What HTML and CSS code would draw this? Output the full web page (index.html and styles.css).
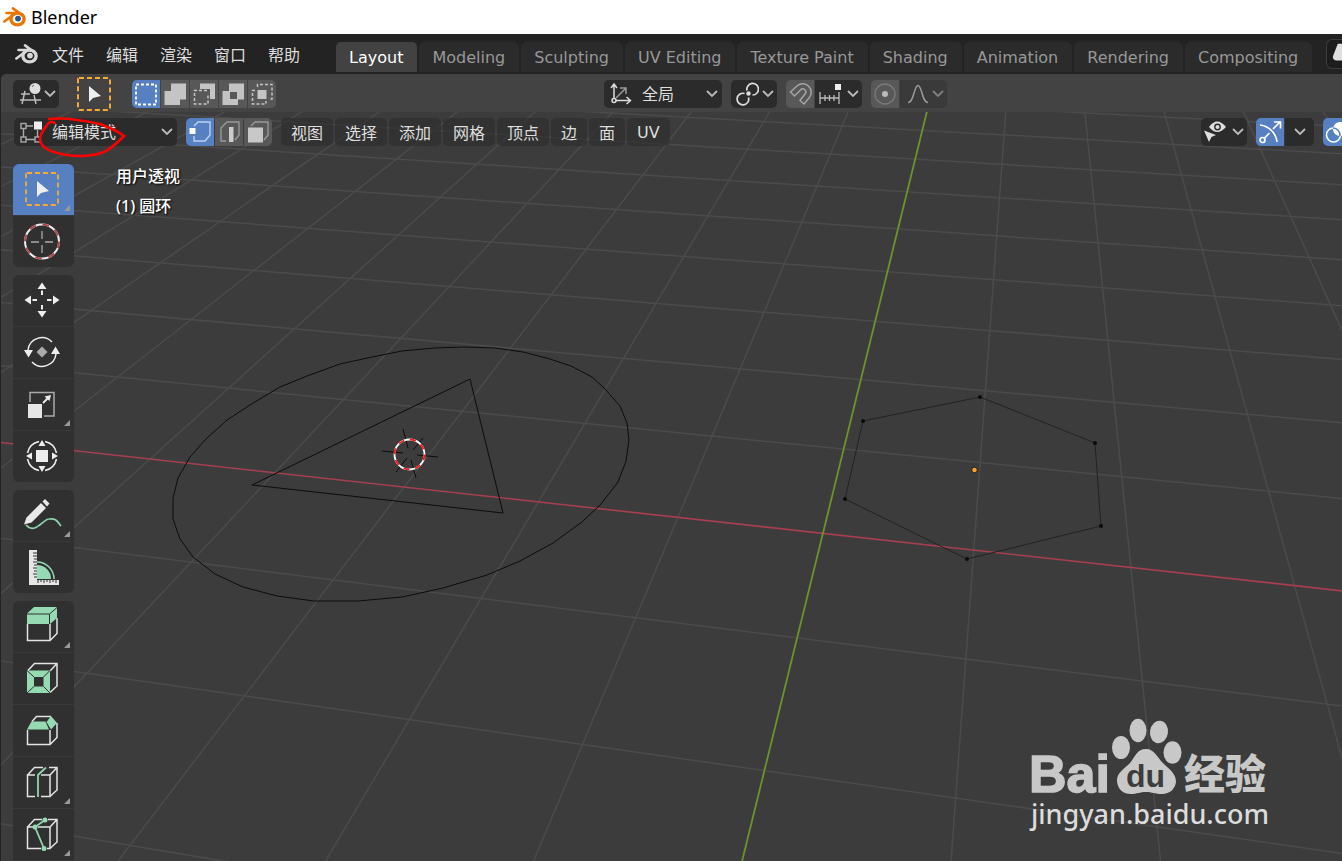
FILE: index.html
```html
<!DOCTYPE html>
<html lang="zh-CN">
<head>
  <meta charset="UTF-8" />
  <meta name="viewport" content="width=device-width, initial-scale=1.0"/>
  <title>Blender</title>
  <link rel="stylesheet" href="styles.css">
</head>
<body>

<!-- Shared icons -->
<svg class="defs" aria-hidden="true">
  <symbol id="chevron" viewBox="0 0 12 8"><path d="M1 1l5 5 5-5" fill="none" stroke="currentColor" stroke-width="1.800"/></symbol>
  <symbol id="logo" viewBox="0 0 24 20">
    <path d="M10 1.400L19 8M3.500 6H14M1.400 14.500L12 6.500" fill="none" stroke="currentColor" stroke-width="2.600" stroke-linecap="round"/>
    <ellipse cx="14.500" cy="12" rx="6.600" ry="5.900" fill="none" stroke="currentColor" stroke-width="3.400"/>
    <circle class="pupil" cx="15" cy="11.600" r="2.900"/>
  </symbol>
</svg>

<header class="titlebar">
  <svg class="logo logo-color"><use href="#logo"/></svg>
  <span>Blender</span>
</header>

<nav class="topbar">
  <svg class="logo"><use href="#logo"/></svg>
  <div class="menus">
    <button>文件</button>
    <button>编辑</button>
    <button>渲染</button>
    <button>窗口</button>
    <button>帮助</button>
  </div>
  <div class="tabs">
    <button class="active">Layout</button>
    <button>Modeling</button>
    <button>Sculpting</button>
    <button>UV Editing</button>
    <button>Texture Paint</button>
    <button>Shading</button>
    <button>Animation</button>
    <button>Rendering</button>
    <button>Compositing</button>
  </div>
  <button class="scene-btn" aria-label="Scene">
    <svg viewBox="0 0 16 30"><path d="M11 4L6 17q-1 4 3 5h7V4z" fill="#e0e0e0"/></svg>
  </button>
</nav>

<main class="editor">
  <!-- 3D scene -->
  <svg class="scene" viewBox="0 74 1342 787" preserveAspectRatio="xMinYMin slice">
    <g id="grid"></g>
    <polygon class="wire" points="629,440 626,461 618,482 601,504 582,522 553,543 520,561 487,575 443,588 402,597 358,601 314,601 277,596 243,587 215,574 193,557 180,539 173,519 173,498 178,478 190,457 206,439 227,420 253,403 280,387 307,376 340,364 372,357 402,351 434,348 464,347 495,348 523,352 550,359 571,366 592,377 605,389 620,406 627,423"/>
    <polygon class="wire" points="470,379 252,485 503,513"/>
    <polygon class="wire mesh" points="863,421 980,397 1095,443 1101,526 967,559 845,499"/>
    <g fill="#0a0a0a">
      <circle cx="863" cy="421" r="2"/><circle cx="980" cy="397" r="2"/>
      <circle cx="1095" cy="443" r="2"/><circle cx="1101" cy="526" r="2"/>
      <circle cx="967" cy="559" r="2"/><circle cx="845" cy="499" r="2"/>
    </g>
    <circle cx="974.5" cy="470" r="2.8" fill="#ffa028" stroke="#222" stroke-width="1"/>
    <!-- 3D cursor -->
    <path class="wire" d="M403 429l5 19M423 438l-10 12M382 451l21 2M417 455l21 2M411 460l5 18M407 458l-11 14"/>
    <circle cx="409.500" cy="454.500" r="15" fill="none" stroke="#fff" stroke-width="1.800"/>
    <circle cx="409.500" cy="454.500" r="15" fill="none" stroke="#f01818" stroke-width="1.800" stroke-dasharray="5.890 5.890"/>
  </svg>

  <div class="tool-header">
    <button class="control type-btn" aria-label="Editor type">
      <svg viewBox="0 0 28 28"><path d="M8 14h9M7 20h21M12 11l-3 13M21 15l2 9" fill="none" stroke="#bbb" stroke-width="1.500"/><circle cx="22" cy="8.500" r="5.500" fill="#ddd"/><path d="M19 7a4 4 0 0 1 2-2" fill="none" stroke="#666"/></svg>
      <svg class="chev"><use href="#chevron"/></svg>
    </button>
    <button class="active-tool" aria-label="Active tool">
      <svg viewBox="0 0 36 36"><rect x="2" y="2" width="32" height="32" rx="1" fill="none" stroke="#f8a935" stroke-width="2" stroke-dasharray="5 3"/><path d="M13 10v16l4-4 8-2z" fill="#eee"/></svg>
    </button>
    <div class="group">
      <button class="on" aria-label="Set"><svg viewBox="0 0 28 28"><rect x="4" y="4.500" width="20" height="20" fill="none" stroke="#fff" stroke-width="1.800" stroke-dasharray="3 2"/></svg></button>
      <button aria-label="Extend"><svg viewBox="0 0 28 28"><path d="M10 3.500h15v16h-6v5.500H3.500V11H10z" fill="#c4c4c4"/></svg></button>
      <button aria-label="Subtract"><svg viewBox="0 0 28 28"><path d="M10 3.500h15V19h-5V9H10z" fill="#c4c4c4"/><path d="M7 10.500H4.500V24H18v-9M9 10.500h9" fill="none" stroke="#c4c4c4" stroke-width="1.500" stroke-dasharray="3 2"/></svg></button>
      <button aria-label="Difference"><svg viewBox="0 0 28 28"><path d="M10 3.500h15v16h-6v5.500H3.500V11H10zM11 12v7h7v-7z" fill="#c4c4c4" fill-rule="evenodd"/></svg></button>
      <button aria-label="Intersect"><svg viewBox="0 0 28 28"><path d="M9.500 7V4.500H24V19h-3M7 10.500H4.500V24H18v-3" fill="none" stroke="#c4c4c4" stroke-width="1.500" stroke-dasharray="3 2"/><rect x="9.500" y="10" width="9" height="9" fill="#c4c4c4"/></svg></button>
    </div>

    <div class="center">
      <label class="control select orient">
        <svg viewBox="0 0 28 28"><g fill="none" stroke="#ddd" stroke-width="1.500"><path d="M10 18V4M7 8l3-4 3 4M12 20.500h14M22.500 17l4 3.500-4 3.500"/><circle cx="10" cy="20.500" r="2"/><path d="M12 18l10-10M16 8h6v6" stroke="#999"/></g></svg>
        <select aria-label="Orientation"><option>全局</option></select>
        <svg class="chev"><use href="#chevron"/></svg>
      </label>
      <button class="control type-btn" aria-label="Pivot">
        <svg viewBox="0 0 28 28"><g fill="none" stroke="#ddd" stroke-width="1.700"><path d="M16 10.500a5.800 5.800 0 1 1 5.500 4.500M13.500 13.500a5.800 5.800 0 1 0 4 4"/></g><circle cx="17.500" cy="13.500" r="2.200" fill="#ddd"/></svg>
        <svg class="chev"><use href="#chevron"/></svg>
      </button>
      <div class="group">
        <button aria-label="Snap"><svg viewBox="0 0 28 28"><path d="M4.500 12L11 6a8.500 8.500 0 0 1 12 12l-5 6-4-3.500 5-6.500a3 3 0 0 0-4.500-4l-6 6z" fill="none" stroke="#a5a5a5" stroke-width="1.500"/></svg></button>
        <button class="dark wide" aria-label="Snap to">
          <svg viewBox="0 0 28 28"><path d="M5 12v12M24 12v12M5 18h19M10 15v6M14.500 15v6M19 15v6" fill="none" stroke="#bbb" stroke-width="1.300"/><rect x="20" y="4" width="6" height="6" fill="#eee"/></svg>
          <svg class="chev"><use href="#chevron"/></svg>
        </button>
      </div>
      <div class="group faded">
        <button aria-label="Proportional editing"><svg viewBox="0 0 28 28"><circle cx="14" cy="14" r="10" fill="none" stroke="#7a7a7a" stroke-width="1.300"/><circle cx="14" cy="14" r="3" fill="#bbb"/></svg></button>
        <button class="dim wide" aria-label="Falloff">
          <svg viewBox="0 0 28 28"><path d="M8 22.500c6 0 6-17 10-17s4 17 10 17" fill="none" stroke="#999" stroke-width="1.500"/></svg>
          <svg class="chev"><use href="#chevron"/></svg>
        </button>
      </div>
    </div>
  </div>

  <div class="view-header">
    <label class="control select mode">
      <svg viewBox="0 0 28 28"><g fill="none" stroke="#aaa" stroke-width="1.400"><rect x="7" y="5.500" width="5" height="5"/><rect x="7" y="19" width="5" height="5"/><rect x="21" y="19" width="5" height="5"/><path d="M9.500 11v8M12 8h7M12 21.500h9M23.500 12v7"/></g><rect x="20" y="3.500" width="8" height="8" fill="#eee"/></svg>
      <select aria-label="Mode"><option>编辑模式</option></select>
      <svg class="chev"><use href="#chevron"/></svg>
    </label>
    <div class="group">
      <button class="on" aria-label="Vertex"><svg viewBox="0 0 28 28"><path d="M8 8l4-4h12v13l-5 6H8v-5" fill="none" stroke="#bcd0f0" stroke-width="1.400"/><rect x="3.500" y="10" width="6" height="6" fill="#fff"/></svg></button>
      <button aria-label="Edge"><svg viewBox="0 0 28 28"><path d="M11 23H6V10l6-6h12v13l-4 5" fill="none" stroke="#999" stroke-width="1.400"/><rect x="14" y="9" width="4.500" height="15" fill="#ccc"/></svg></button>
      <button aria-label="Face"><svg viewBox="0 0 28 28"><path d="M7 8l4-4h13v13l-4 5" fill="none" stroke="#999" stroke-width="1.400"/><rect x="4" y="9.500" width="15" height="15" fill="#c8c8c8"/></svg></button>
    </div>
    <div class="view-menus">
      <button>视图</button>
      <button>选择</button>
      <button>添加</button>
      <button>网格</button>
      <button>顶点</button>
      <button>边</button>
      <button>面</button>
      <button>UV</button>
    </div>
    <div class="view-options">
      <button class="control type-btn" aria-label="Visibility">
        <svg viewBox="0 0 28 28"><path d="M8 9q8-11 17 0-9 10-17 0z" fill="#ddd"/><circle cx="16.500" cy="9" r="2.700" fill="#ddd" stroke="#2b2b2b" stroke-width="1.400"/><path d="M3 12.500l12 4.500-4.500 2L8 24z" fill="#ddd"/></svg>
        <svg class="chev"><use href="#chevron"/></svg>
      </button>
      <div class="group">
        <button class="on" aria-label="Gizmos"><svg viewBox="0 0 28 28"><g fill="none" stroke="#fff" stroke-width="1.700"><path d="M4 7c9 1 16 8 17 17M17 11l7-7M18 4h6.500v6.500M8.500 20l5-5"/><circle cx="6.500" cy="22" r="2.500"/></g></svg></button>
        <button class="dark more" aria-label="Gizmo options"><svg class="chev"><use href="#chevron"/></svg></button>
      </div>
      <div class="group overlay-group">
        <button class="on" aria-label="Overlays"><svg viewBox="0 0 28 28"><circle cx="17" cy="11" r="7" fill="#fff"/><circle cx="10.500" cy="17" r="7" fill="none" stroke="#fff" stroke-width="1.600"/><path d="M10 10a7 7 0 0 1 7 8" fill="none" stroke="#5680c2" stroke-width="1.500"/></svg></button>
      </div>
    </div>
  </div>

  <div class="workspace">
    <aside class="toolbar">
      <div class="tool-group">
        <button class="on has-more" aria-label="Select box"><svg viewBox="0 0 61 51"><rect x="13" y="9" width="32" height="32" rx="1" fill="none" stroke="#f8a935" stroke-width="1.800" stroke-dasharray="5 3"/><path d="M24 17v16l4-4 8-2z" fill="#eee"/></svg></button>
        <button aria-label="Cursor"><svg viewBox="0 0 61 51"><circle cx="29" cy="25.500" r="17" fill="none" stroke="#eee" stroke-width="2"/><circle cx="29" cy="25.500" r="17" fill="none" stroke="#a84848" stroke-width="2" stroke-dasharray="6.680 6.670"/><path d="M29 15v8M29 29v8M18 26h8M32 26h8" stroke="#aaa" stroke-width="1.300"/></svg></button>
      </div>
      <div class="tool-group">
        <button aria-label="Move"><svg viewBox="0 0 61 51"><path d="M29 7.500l4.500 6.500h-9zM29 42.500l4.500-6.500h-9zM11.500 25l6.500-4.500v9zM46.500 25L40 20.500v9z" fill="#eee"/><path d="M29 15.500v4.500M29 30v4.500M19.500 25H24M34 25h4.500" stroke="#eee" stroke-width="2"/></svg></button>
        <button aria-label="Rotate"><svg viewBox="0 0 61 51"><path d="M15 23a14 14 0 0 1 24-8M43 27a14 14 0 0 1-24 8" fill="none" stroke="#eee" stroke-width="1.500"/><path d="M11 23h9l-4.500 7.500zM38 27h9l-4.500-7.500z" fill="#eee"/><path d="M29 19.500l5.500 5.500-5.500 5.500-5.500-5.500z" fill="#aaa"/></svg></button>
        <button class="has-more" aria-label="Scale"><svg viewBox="0 0 61 51"><path d="M17 23V13.500h24V37H31" fill="none" stroke="#aaa" stroke-width="1.500"/><rect x="15" y="25" width="14" height="14" fill="#e6e6e6"/><path d="M30 24l6-6" stroke="#eee" stroke-width="1.800"/><path d="M38 16l-1.500 6-5-4.500z" fill="#eee"/></svg></button>
        <button aria-label="Transform"><svg viewBox="0 0 61 51"><path d="M32 10.500A15 15 0 0 1 43.500 22M43.500 28A15 15 0 0 1 32 39.500M26 39.500A15 15 0 0 1 14.500 28M14.500 22A15 15 0 0 1 26 10.500" fill="none" stroke="#eee" stroke-width="1.500"/><rect x="23" y="19" width="12" height="12" fill="#eee"/><path d="M29 9l3.500 6h-7zM29 41l3.500-6h-7zM13 25l6-3.500v7zM45 25l-6-3.500v7z" fill="#eee"/></svg></button>
      </div>
      <div class="tool-group">
        <button class="has-more" aria-label="Annotate"><svg viewBox="0 0 61 51"><path d="M13 35c9 10 17-6 23-6 7-1 8 2 12 7" fill="none" stroke="#8fd6ae" stroke-width="1.700"/><path d="M11 34.500l2.500-7L28 13l5 5-14.500 14.500zM29.500 11.500L32 9l4.500 4.500L34 16.500z" fill="#e8e8e8"/></svg></button>
        <button aria-label="Measure"><svg viewBox="0 0 61 51"><path d="M24 37V23a14 14 0 0 1 14 14z" fill="#95dab2"/><path d="M24 20a17 17 0 0 1 17 17" fill="none" stroke="#95dab2" stroke-width="1.500"/><path d="M16 8h8v30h22v5H16z" fill="#e6e6e6"/><path d="M20 11h4M20 14h4M21 17h3M20 20h4M21 23h3M20 26h4M21 29h3M20 32h4M21 35h3M25 38v3M28 38v2M31 38v3M34 38v2M37 38v3M40 38v2M43 38v3" stroke="#303030" stroke-width="1"/></svg></button>
      </div>
      <div class="tool-group">
        <button class="has-more" aria-label="Extrude"><svg class="cube" viewBox="0 0 61 51"><path d="M14.500 23v16.500H37V23M37 39.500l7-7V17"/><path class="green" d="M14 12.500L21 6h23v11l-7 6H14z"/><path class="cut" d="M14 13h22.500v10M36.500 13L44 6.500"/></svg></button>
        <button aria-label="Inset"><svg class="cube" viewBox="0 0 61 51"><path d="M14.500 18l7-7.500h22.500V33l-7 6.500M37 18l7-7.500"/><path class="green" d="M14 17.500h23V40H14zM21 24v9.500h9.500V24z" fill-rule="evenodd"/><path class="cut" d="M14 17.500l7 6.500M37 17.500L30.500 24M14 40l7-6.500M37 40l-6.500-6.500"/></svg></button>
        <button aria-label="Bevel"><svg class="cube" viewBox="0 0 61 51"><path d="M14.500 25v14.500H37V25M37 39.500l7-7V18M19 16.500l4.500-5H38"/><path class="green" d="M14 24.500l4.500-8h14l3.500 8zM33.500 17l4.500-6 6 7-6 6.500z"/></svg></button>
        <button class="has-more" aria-label="Loop cut"><svg class="cube" viewBox="0 0 61 51"><path d="M22 39.500h-7.500V18H22M28 39.500h9V18h-9M14.500 18l7-7.500H30M36 10.500h8V33l-7 6.500M37 18l7-7.500"/><path class="line" d="M25 40V18l8-7.500"/></svg></button>
        <button class="has-more" aria-label="Knife"><svg class="cube" viewBox="0 0 61 51"><path d="M28 39.500H14.500V18H20M25 18h12v21.500h-3M14.500 18l7-7.500H29M35 10.500h9V33l-7 6.500M37 18l7-7.500"/><path class="line" d="M32 11l-10 7 9 21.500"/><path class="green" d="M29.500 11a2.500 2.500 0 0 1 5 0 2.500 2.500 0 0 1-5 0M19.500 18a2.500 2.500 0 0 1 5 0 2.500 2.500 0 0 1-5 0M28.500 39.500a2.500 2.500 0 0 1 5 0 2.500 2.500 0 0 1-5 0"/></svg></button>
        <button aria-label="Poly build"></button>
      </div>
    </aside>
    <div class="view-info">
      <div>用户透视</div>
      <div>(1) 圆环</div>
    </div>
  </div>

  <!-- Red mark and watermark on top of the editor -->
  <svg class="marks" viewBox="0 74 1342 787" preserveAspectRatio="xMinYMin slice">
    <path d="M49 119C64 117 82 120 100 124C108 127 119 132 124 136C118 142 111 149 104 152C94 156 78 157 67 155C55 153 44 150 41 143C38 138 43 130 47 125C49 122 51 121 55 123" fill="none" stroke="#f00" stroke-width="2.500" stroke-linecap="round"/>
    <g fill="#c8c8c8">
      <text class="wm-bai" x="1029" y="792">Bai</text>
      <ellipse cx="1121" cy="747.500" rx="9" ry="11.500"/>
      <ellipse cx="1138" cy="730.500" rx="8.500" ry="11.700"/>
      <ellipse cx="1159" cy="732" rx="9" ry="11.300" transform="rotate(8 1159 732)"/>
      <ellipse cx="1172.500" cy="752.500" rx="9" ry="11.300"/>
      <path d="M1146 749C1155 749 1157 758 1165 765C1172 771 1176 775 1176 782C1175 789 1170 794 1162 794C1155 794 1152 792 1146 792C1140 792 1137 794 1131 794C1122 794 1117 788 1117 780C1117 773 1125 768 1130 763C1135 757 1137 749 1146 749Z"/>
      <text class="wm-du" x="1126" y="787">du</text>
      <text class="wm-cn" x="1184" y="789">经验</text>
      <text class="wm-url" x="1031" y="824">jingyan.baidu.com</text>
    </g>
  </svg>
</main>

<script>
  // Perspective of the floor grid: (x, y) on the floor -> point on screen
  function project(x, y) {
    const w = 1 - 0.0198 * x + 0.1065 * y;
    return [
      (822.9 + 131.6 * x + 110.65 * y) / w,
      (533.4 + 5.8 * x - 36.5 * y) / w
    ];
  }

  const grid = document.getElementById('grid');

  function addLine(from, to, cls) {
    const line = document.createElementNS('http://www.w3.org/2000/svg', 'line');
    line.setAttribute('x1', from[0]);
    line.setAttribute('y1', from[1]);
    line.setAttribute('x2', to[0]);
    line.setAttribute('y2', to[1]);
    line.setAttribute('class', cls);
    grid.appendChild(line);
  }

  for (let i = -24; i <= 12; i++) {
    if (i !== 0) addLine(project(i, -5), project(i, 24), 'grid-line');
  }
  for (let j = -5; j <= 24; j++) {
    if (j !== 0) addLine(project(-24, j), project(12, j), 'grid-line');
  }
  addLine(project(-24, 0), project(12, 0), 'axis-x');
  addLine(project(0, -5), project(0, 24), 'axis-y');
</script>

</body>
</html>
```
FILE: styles.css
```css
* {
  box-sizing: border-box;
}

body {
  margin: 0;
  height: 100vh;
  display: flex;
  flex-direction: column;
  overflow: hidden;
  background: #232323;
  color: #dedede;
  font-family: "DejaVu Sans", "Noto Sans CJK SC", sans-serif;
  font-size: 16px;
}

button,
select {
  margin: 0;
  padding: 0;
  border: none;
  background: none;
  color: inherit;
  font: inherit;
}

svg {
  display: block;
  flex: none;
}

.defs {
  position: absolute;
  width: 0;
  height: 0;
}

/* Title bar */
.titlebar {
  flex: none;
  height: 34px;
  display: flex;
  align-items: center;
  gap: 4px;
  padding-left: 3px;
  background: #fff;
  color: #000;
  font-family: "Noto Sans", sans-serif;
  font-size: 18px;
}

.logo {
  width: 24px;
  height: 20px;
  color: #d8d8d8;
  fill: #d8d8d8;
}

.logo-color {
  color: #ea7600;
  fill: #265787;
}

/* Top bar */
.topbar {
  flex: none;
  height: 40px;
  display: flex;
  padding-left: 15px;
}

.topbar .logo {
  margin-top: 10px;
}

.menus {
  display: flex;
  height: 40px;
  margin: 0 25px 0 2px;
}

.menus button {
  padding: 0 11px;
}

.tabs {
  display: flex;
  gap: 2px;
  margin-top: 8px;
  height: 30px;
}

.tabs button {
  padding: 0 14px 0 13px;
  border-radius: 5px 5px 0 0;
  background: #2b2b2b;
  color: #989898;
  white-space: nowrap;
}

.tabs .active {
  background: #424242;
  color: #fff;
}

.scene-btn {
  margin: 5px 0 0 auto;
  width: 16px;
  height: 30px;
  border: 1px solid #3d3d3d;
  border-right: none;
  border-radius: 6px 0 0 6px;
  background: #1d1d1d;
}

.scene-btn svg {
  width: 16px;
  height: 28px;
}

/* Editor */
.editor {
  flex: 1;
  min-height: 0;
  position: relative;
  display: flex;
  flex-direction: column;
  overflow: hidden;
  border-left: 1px solid #232323;
  border-radius: 6px 0 0 0;
  background: #3c3c3c;
}

.scene,
.marks {
  position: absolute;
  top: 0;
  left: -1px;
  width: 100vw;
  height: 100%;
}

.marks {
  pointer-events: none;
}

.grid-line {
  stroke: #4b4b4b;
  stroke-width: 1.5;
}

.axis-x {
  stroke: #a63f50;
  stroke-width: 1.6;
}

.axis-y {
  stroke: #6b942b;
  stroke-width: 1.8;
}

.wire {
  fill: none;
  stroke: #0c0c0c;
  stroke-width: 1;
}

.mesh {
  stroke: #222;
}

/* Header rows */
.tool-header,
.view-header {
  position: relative;
  flex: none;
  display: flex;
  align-items: center;
}

.tool-header {
  height: 38px;
  padding: 2px 67px 0 12px;
  background: #434343;
}

.view-header {
  height: 40px;
  padding-left: 13px;
  gap: 9px;
}

.control,
.group {
  display: flex;
  align-items: center;
  height: 28px;
  border-radius: 5px;
  overflow: hidden;
}

.control {
  background: #2b2b2b;
}

.control svg,
.group svg {
  width: 28px;
  height: 28px;
}

.control .chev,
.group .chev {
  width: 12px;
  height: 8px;
  color: #bbb;
}

.type-btn {
  width: 46px;
  gap: 3px;
}

.active-tool {
  margin: 0 20px 0 17px;
}

.active-tool svg {
  width: 36px;
  height: 36px;
}

.group {
  gap: 1px;
}

.group button {
  display: flex;
  align-items: center;
  height: 28px;
  min-width: 28px;
  background: #585858;
}

.group .on {
  background: #5680c2;
}

.group .dark {
  background: #2b2b2b;
}

.group .dim {
  background: #3a3a3a;
}

.group .wide {
  width: 47px;
  gap: 4px;
}

.faded .chev {
  color: #808080;
}

.group .more {
  width: 29px;
  justify-content: center;
}

.center {
  display: flex;
  gap: 9px;
  margin: 0 auto;
}

.select {
  padding-right: 4px;
}

.select select {
  flex: 1;
  min-width: 0;
  padding-left: 10px;
  appearance: none;
}

.orient {
  width: 118px;
}

.mode {
  width: 163px;
}

.view-menus {
  display: flex;
  gap: 2px;
}

.view-menus button {
  height: 28px;
  padding: 0 10px;
  border-radius: 5px;
  background: rgba(43, 43, 43, 0.6);
}

.view-options {
  display: flex;
  gap: 9px;
  margin-left: auto;
}

.overlay-group {
  width: 19px;
  border-radius: 5px 0 0 5px;
}

/* Toolbar */
.workspace {
  position: relative;
  display: flex;
  gap: 42px;
  padding: 12px 0 0 12px;
}

.toolbar {
  display: flex;
  flex-direction: column;
  gap: 8px;
  width: 61px;
}

.tool-group {
  display: flex;
  flex-direction: column;
  gap: 1px;
  border-radius: 6px;
  overflow: hidden;
  background: #393939;
}

.tool-group button {
  position: relative;
  height: 51px;
  background: #303030;
}

.tool-group .on {
  background: #5680c2;
}

.tool-group svg {
  width: 61px;
  height: 51px;
}

/* Small corner triangle: more tools behind the button */
.has-more::after {
  content: "";
  position: absolute;
  right: 4px;
  bottom: 4px;
  border-left: 6px solid transparent;
  border-bottom: 6px solid #999;
}

.cube {
  fill: none;
  stroke: #e4e4e4;
  stroke-width: 1.5;
}

.cube .green {
  fill: #95dab2;
  stroke: none;
}

.cube .cut {
  stroke: #303030;
  stroke-width: 1;
}

.cube .line {
  stroke: #8fd6ae;
  stroke-width: 1.8;
}

.view-info {
  color: #fff;
  font-family: "Noto Sans", "Noto Sans CJK SC", sans-serif;
  font-weight: 500;
  line-height: 30px;
  margin-top: -3px;
  text-shadow: 1px 1px 2px #000;
}

/* Watermark */
.wm-bai {
  font: bold 52px "Liberation Sans", sans-serif;
  stroke: #c8c8c8;
  stroke-width: 1.5;
}

.wm-du {
  font: bold 32px "Liberation Sans", sans-serif;
  fill: #3c3c3c;
}

.wm-cn {
  font: 900 41px "Noto Sans CJK SC", sans-serif;
}

.wm-url {
  font: 500 27px "Noto Sans", sans-serif;
  fill: #dcdcdc;
}
```
